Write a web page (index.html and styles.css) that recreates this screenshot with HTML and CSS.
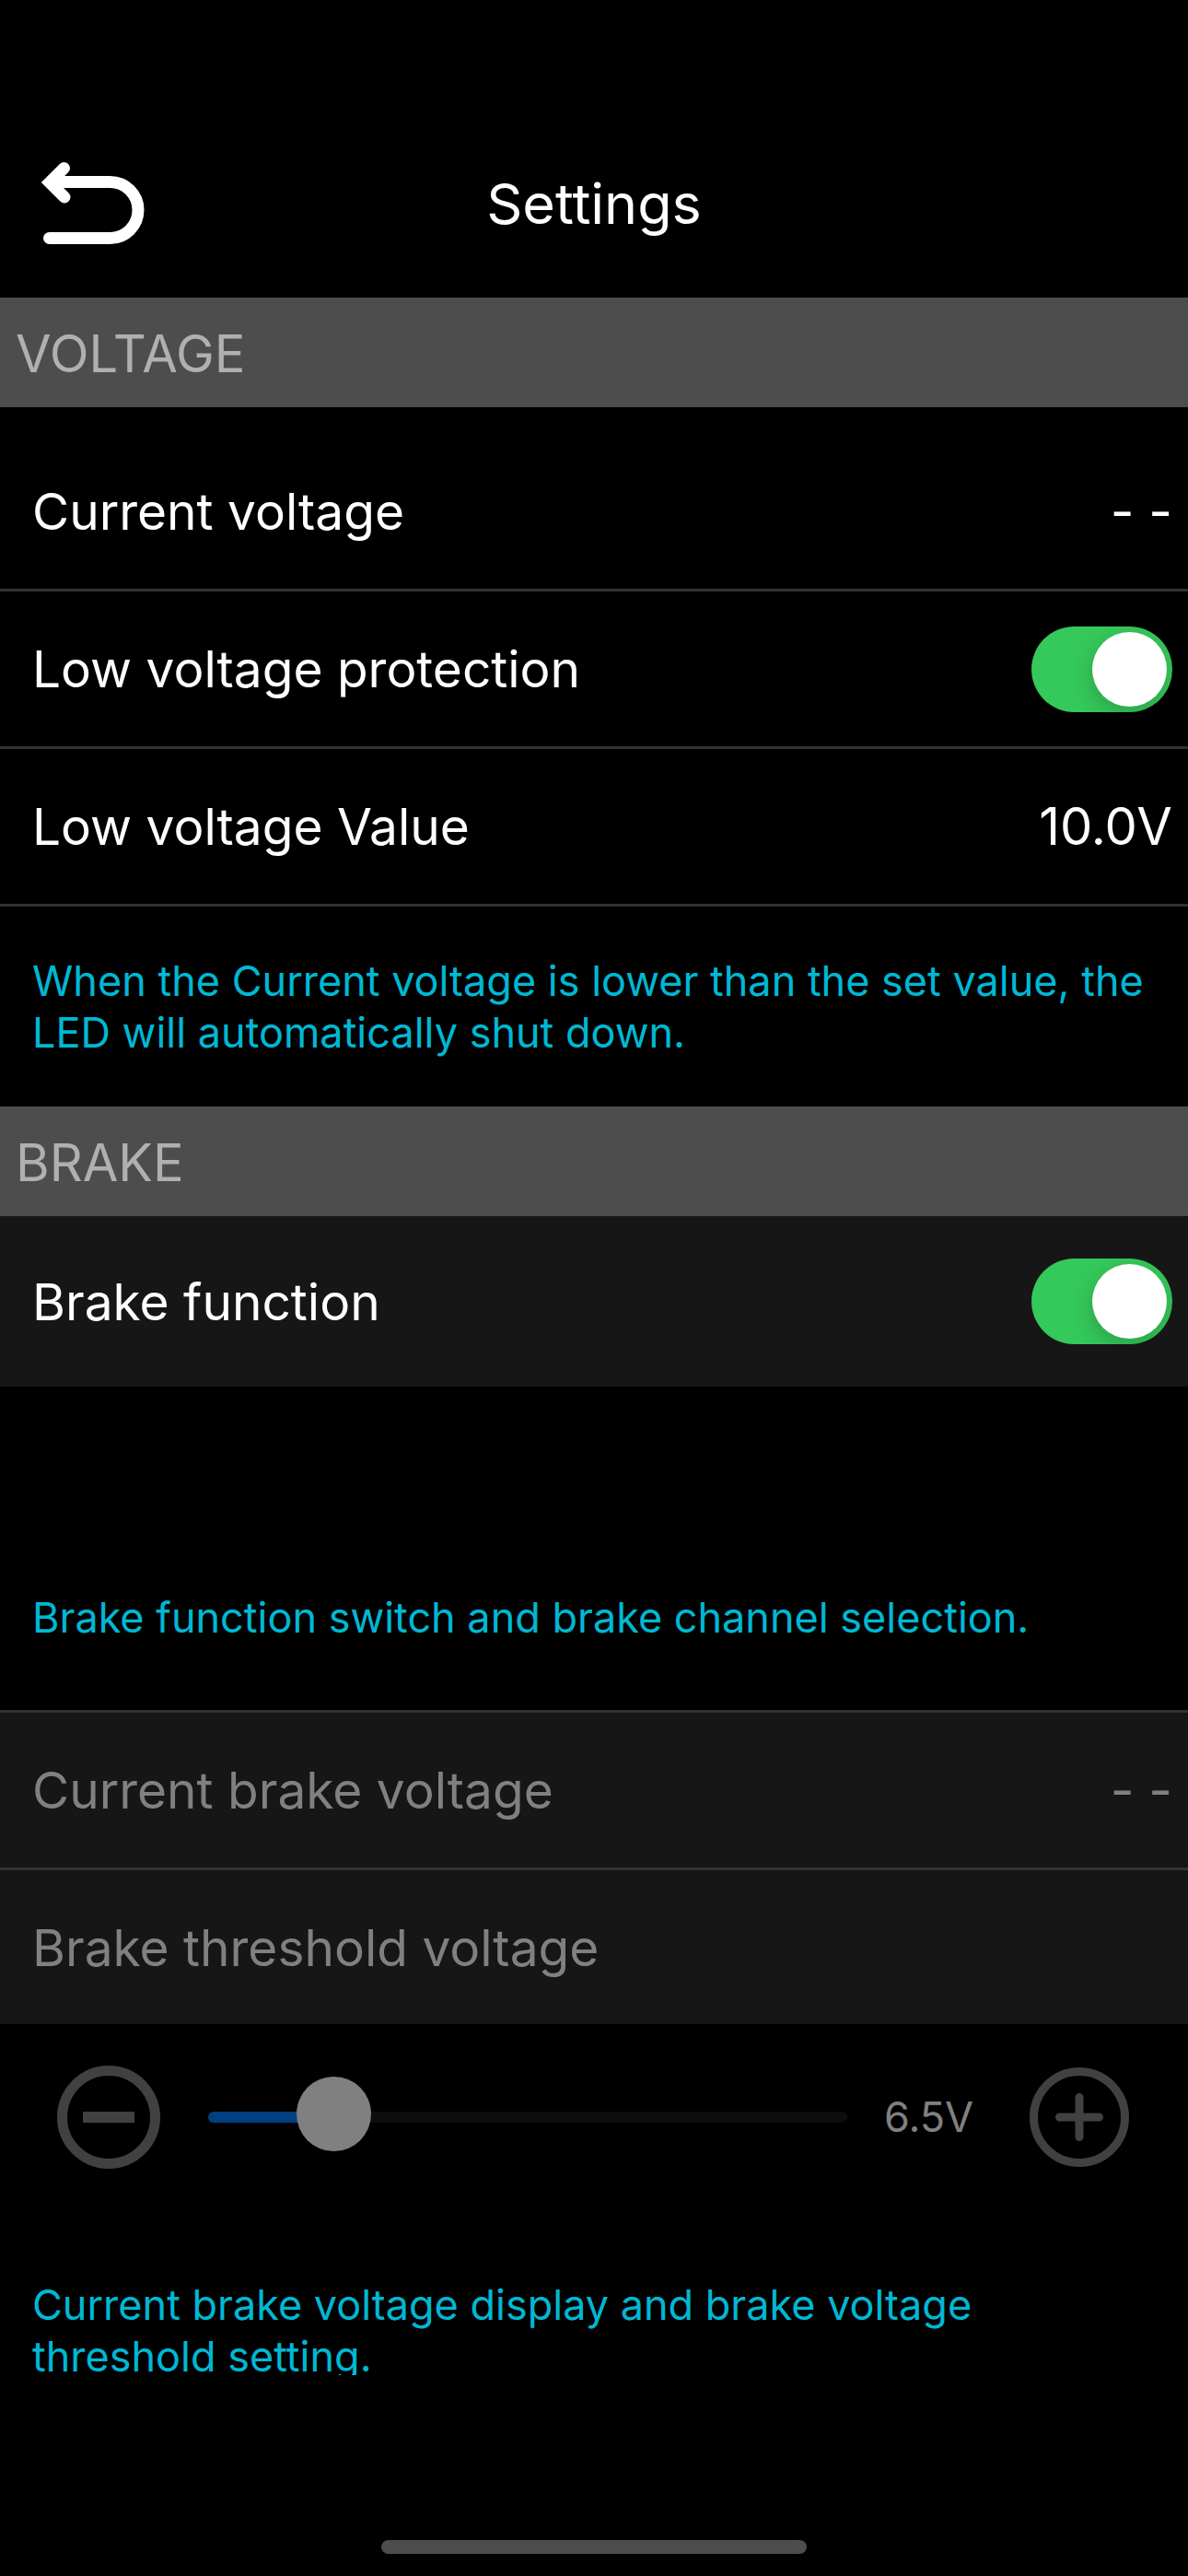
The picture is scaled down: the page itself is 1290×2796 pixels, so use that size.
FILE: index.html
```html
<!DOCTYPE html>
<html lang="en">
<head>
    <meta charset="UTF-8">
    <meta name="viewport" content="width=device-width, initial-scale=1.0">
    <title>Settings</title>
    <link rel="stylesheet" href="styles.css">
</head>
<body>
    <!-- top bar -->
    <header class="header">
        <button class="back-btn" type="button" aria-label="Back">
            <svg width="113" height="91" viewBox="0 0 113 91" fill="none" stroke="#fff" stroke-width="13">
                <path d="M25.5 7.5L10 23L26 39" stroke-linecap="round" stroke-linejoin="miter"/>
                <path d="M12 22.5H75.5A30.5 30.5 0 0 1 75.5 83.5H9.5" stroke-linecap="round"/>
            </svg>
        </button>
        <h1 class="title">Settings</h1>
    </header>

    <main>
        <!-- voltage -->
        <h2 class="section-title">VOLTAGE</h2>
        <div class="list">
            <div class="row">
                <span class="row-label">Current voltage</span>
                <span>- -</span>
            </div>
            <div class="row">
                <label class="row-label" for="lowVoltage">Low voltage protection</label>
                <input class="switch" type="checkbox" id="lowVoltage" checked>
            </div>
            <div class="row">
                <span class="row-label">Low voltage Value</span>
                <span>10.0V</span>
            </div>
        </div>
        <p class="tip">When the Current voltage is lower than the set value, the LED will automatically shut down.</p>

        <!-- brake -->
        <h2 class="section-title">BRAKE</h2>
        <div class="row row-brake">
            <label class="row-label" for="brake">Brake function</label>
            <input class="switch" type="checkbox" id="brake" checked>
        </div>
        <p class="tip tip-brake">Brake function switch and brake channel selection.</p>

        <div class="list-disabled">
            <div class="row">
                <span class="row-label">Current brake voltage</span>
                <span>- -</span>
            </div>
            <div class="row">
                <label class="row-label" for="threshold">Brake threshold voltage</label>
            </div>
        </div>
        <div class="slider-row">
            <button class="round-btn" type="button" aria-label="Decrease" disabled>
                <svg width="112" height="112" viewBox="0 0 112 112" fill="none" stroke="#414141">
                    <circle cx="56" cy="56" r="50.5" stroke-width="11"/>
                    <path d="M28 56H84" stroke-width="12"/>
                </svg>
            </button>
            <input class="slider" type="range" id="threshold" min="5" max="14.6" step="0.1" value="6.5" disabled style="--fill: 20%">
            <output class="slider-value" for="threshold">6.5V</output>
            <button class="round-btn" type="button" aria-label="Increase" disabled>
                <svg width="108" height="108" viewBox="0 0 108 108" fill="none" stroke="#414141">
                    <circle cx="54" cy="54" r="49.5" stroke-width="9"/>
                    <path d="M32.5 54H75.5M54 32.5V75.5" stroke-width="9" stroke-linecap="round"/>
                </svg>
            </button>
        </div>
        <p class="tip tip-threshold">Current brake voltage display and brake voltage threshold setting.</p>
    </main>

    <div class="home-bar"></div>
</body>
</html>
```

FILE: styles.css
```css
* {
    margin: 0;
    padding: 0;
    box-sizing: border-box;
}
body {
    display: flex;
    flex-direction: column;
    min-height: 100vh;
    font-family: Inter, Roboto, sans-serif;
    font-size: 56px;
    line-height: 68px;
    color: #fff;
    background: #000;
}
button {
    background: none;
    border: none;
    cursor: pointer;
}
svg {
    display: block;
}

/* top bar */
.header {
    display: grid;
    grid-template-columns: 1fr auto 1fr;
    align-items: center;
    padding: 118px 44px 0;
    height: 323px;
}
.back-btn {
    justify-self: start;
}
.title {
    font-size: 61px;
    font-weight: 400;
}

/* sections */
.section-title {
    padding: 27px 17px 24px;
    font-size: 56px;
    font-weight: 400;
    color: #b0b0b0;
    background: #4d4d4d;
}
.list {
    padding-top: 29px;
}
.row {
    display: flex;
    justify-content: space-between;
    align-items: center;
    padding: 0 17px 0 35px;
    min-height: 171px;
    border-bottom: 3px solid #323232;
}
.row-label {
    font-size: 55px;
    line-height: 70px;
}
.row-brake {
    min-height: 185px;
    background: #161616;
    border-bottom: none;
}
.list-disabled {
    color: #808080;
    background: #161616;
    border-top: 3px solid #323232;
}
.list-disabled .row:last-child {
    min-height: 167px;
    border-bottom: none;
}
.tip {
    padding: 53px 35px 52px;
    font-size: 45px;
    line-height: 56px;
    color: #00b8d4;
}
.tip-brake {
    padding-top: 223px;
    padding-bottom: 72px;
}
.tip-threshold {
    margin: 75px 35px 0;
    padding: 0;
    height: 104px;
    overflow: hidden;
}

/* switch */
.switch {
    appearance: none;
    display: flex;
    padding: 6px;
    width: 153px;
    height: 93px;
    background: #555;
    border-radius: 47px;
    overflow: hidden;
    cursor: pointer;
}
.switch::before {
    content: "";
    width: 81px;
    height: 81px;
    background: #fff;
    border-radius: 50%;
    box-shadow: 0 8px 24px rgba(0, 0, 0, 0.2);
}
.switch:checked {
    justify-content: flex-end;
    background: #35c85a;
}

/* slider */
.slider-row {
    display: flex;
    align-items: center;
    padding: 0 64px 0 62px;
    height: 202px;
}
.slider {
    appearance: none;
    flex: 1;
    margin: 0 40px 0 52px;
    min-width: 0;
    height: 88px;
    background: transparent;
}
.slider::-webkit-slider-runnable-track {
    height: 12px;
    background: linear-gradient(to right, #003f80 var(--fill), #0d0d0d var(--fill));
    border-radius: 6px;
}
.slider::-webkit-slider-thumb {
    appearance: none;
    margin-top: -38px;
    width: 81px;
    height: 81px;
    background: #808080;
    border-radius: 50%;
}
.slider-value {
    margin-right: 60px;
    width: 98px;
    font-size: 45px;
    white-space: nowrap;
    color: #808080;
}

/* home indicator */
.home-bar {
    margin: auto auto 24px;
    width: 462px;
    height: 15px;
    background: #4d4d4d;
    border-radius: 8px;
}
```
